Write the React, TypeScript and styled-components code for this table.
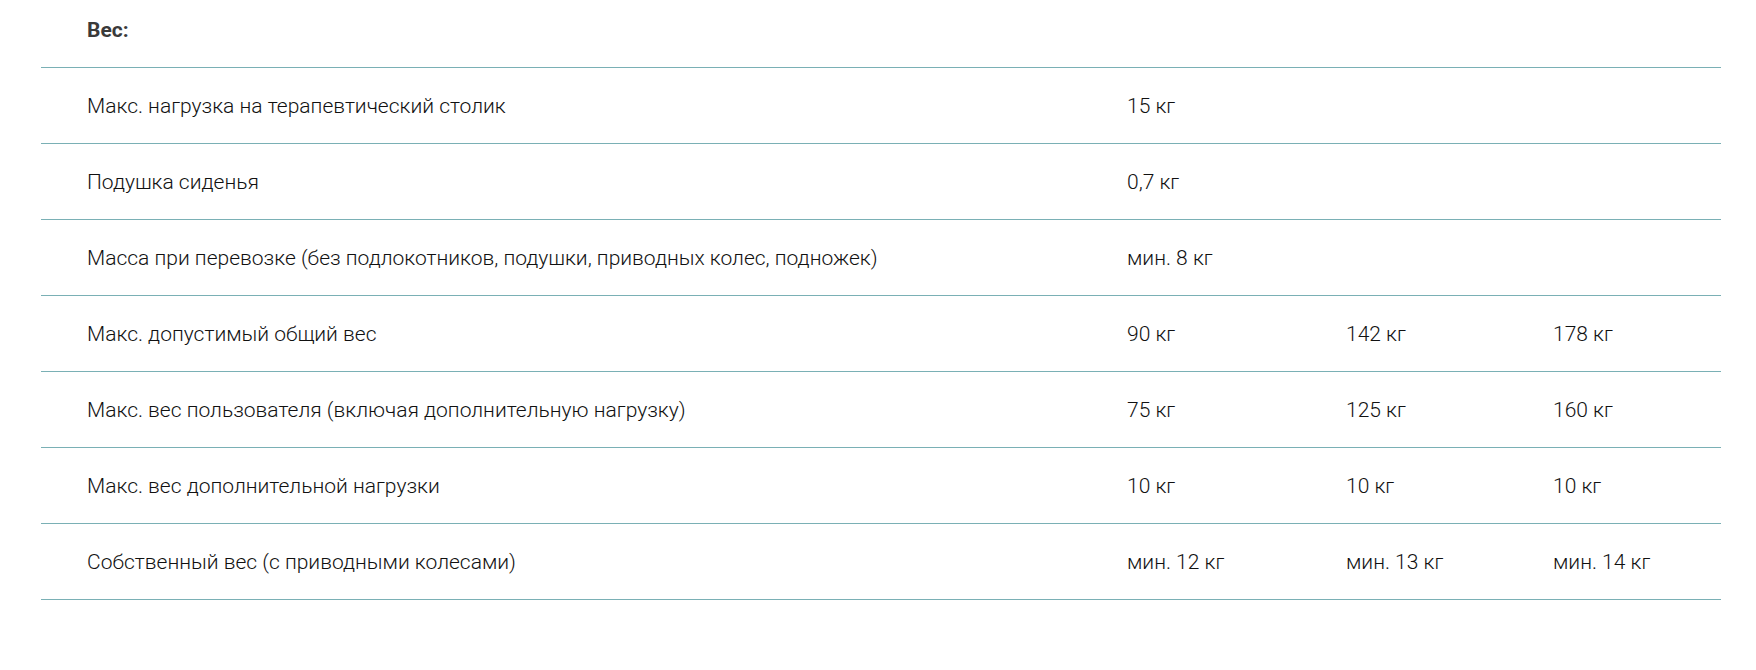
import React from 'react';
import styled, { createGlobalStyle } from 'styled-components';

const GlobalStyle = createGlobalStyle`
  body {
    margin: 0;
    background: #fff;
    font-family: Roboto, "Noto Sans", "Liberation Sans", sans-serif;
  }
`;

type Row = { label: string; values: string[] };

const rows: Row[] = [
  { label: 'Макс. нагрузка на терапевтический столик', values: ['15 кг'] },
  { label: 'Подушка сиденья', values: ['0,7 кг'] },
  { label: 'Масса при перевозке (без подлокотников, подушки, приводных колес, подножек)', values: ['мин. 8 кг'] },
  { label: 'Макс. допустимый общий вес', values: ['90 кг', '142 кг', '178 кг'] },
  { label: 'Макс. вес пользователя (включая дополнительную нагрузку)', values: ['75 кг', '125 кг', '160 кг'] },
  { label: 'Макс. вес дополнительной нагрузки', values: ['10 кг', '10 кг', '10 кг'] },
  { label: 'Собственный вес (с приводными колесами)', values: ['мин. 12 кг', 'мин. 13 кг', 'мин. 14 кг'] },
];

const App: React.FC = () => {
  return (
    <>
      <GlobalStyle />
      <Section>
        <Title>Вес:</Title>
        <Table>
          {rows.map((row) => (
            <TableRow key={row.label}>
              <Cell>{row.label}</Cell>
              {row.values.map((v, i) => (
                <Cell key={i}>{v}</Cell>
              ))}
            </TableRow>
          ))}
        </Table>
      </Section>
    </>
  );
};

export default App;

const Section = styled.section`
  width: 1680px;
  margin-left: 41px;
`;

const Title = styled.h3`
  margin: 0;
  height: 67px;
  box-sizing: border-box;
  padding: 18px 0 0 46px;
  font-size: 21px;
  line-height: 24px;
  font-weight: 700;
  color: #3a3a3a;
`;

const Table = styled.div`
  border-top: 1px solid #7ab0b5;
`;

const TableRow = styled.div`
  display: grid;
  grid-template-columns: 1040px 219px 207px 1fr;
  align-items: center;
  height: 76px;
  box-sizing: border-box;
  padding-left: 46px;
  border-bottom: 1px solid #7ab0b5;
`;

const Cell = styled.div`
  font-size: 21px;
  line-height: 24px;
  font-weight: 300;
  color: #111;
  white-space: nowrap;
`;
